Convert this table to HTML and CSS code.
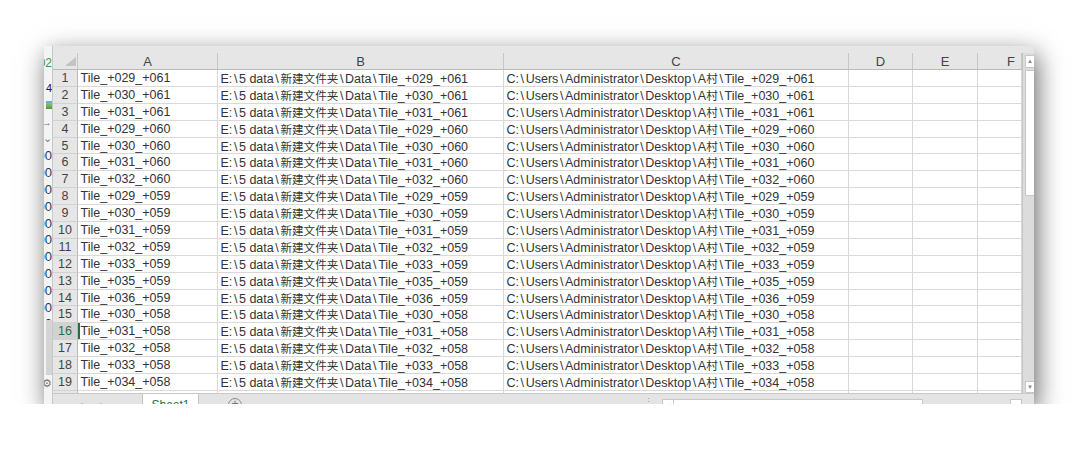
FILE: index.html
```html
<!DOCTYPE html>
<html lang="zh-CN">
<head>
<meta charset="utf-8">
<title>Sheet1</title>
<link rel="stylesheet" href="styles.css">
</head>
<body>
<div class="window">
  <div class="strip">
    <div class="s-top"><span class="s-green">202</span></div>
    <div class="s-line"><span class="s-dark">4</span></div>
    <div class="s-line"><span class="s-icon"></span></div>
    <div class="s-line"><span class="s-gray">→</span></div>
    <div class="s-line"><span class="s-gray">⌄</span></div>
    <div class="s-line"><span class="s-num">00</span></div>
    <div class="s-line"><span class="s-num">00</span></div>
    <div class="s-line"><span class="s-num">00</span></div>
    <div class="s-line"><span class="s-num">00</span></div>
    <div class="s-line"><span class="s-num">00</span></div>
    <div class="s-line"><span class="s-num">00</span></div>
    <div class="s-line"><span class="s-num">00</span></div>
    <div class="s-line"><span class="s-num">00</span></div>
    <div class="s-line"><span class="s-num">00</span></div>
    <div class="s-line"><span class="s-num">00</span></div>
    <div class="s-short"><span class="s-num">00</span></div>
    <div class="s-bar"></div>
    <div class="s-line"><span class="s-gray">⚙</span></div>
  </div>
  <div class="main">
    <div class="topbar"></div>
    <div class="work">
      <div class="sheet">
        <div class="h corner"><svg class="tri" width="24" height="16" viewBox="0 0 24 16"><polygon points="23,4 23,13 12,13" fill="#c3c3c3"/></svg></div>
        <div class="h">A</div><div class="h">B</div><div class="h">C</div><div class="h">D</div><div class="h">E</div><div class="h hF">F</div>

        <div class="rh">1</div><div class="c">Tile_+029_+061</div><div class="c">E:<span class="bs">\</span>5 data<span class="bs">\</span><span class="cjk">新建文件夹</span><span class="bs">\</span>Data<span class="bs">\</span>Tile_+029_+061</div><div class="c">C:<span class="bs">\</span>Users<span class="bs">\</span>Administrator<span class="bs">\</span>Desktop<span class="bs">\</span>A<span class="cjk">村</span><span class="bs">\</span>Tile_+029_+061</div><div class="c"></div><div class="c"></div><div class="c"></div>
        <div class="rh">2</div><div class="c">Tile_+030_+061</div><div class="c">E:<span class="bs">\</span>5 data<span class="bs">\</span><span class="cjk">新建文件夹</span><span class="bs">\</span>Data<span class="bs">\</span>Tile_+030_+061</div><div class="c">C:<span class="bs">\</span>Users<span class="bs">\</span>Administrator<span class="bs">\</span>Desktop<span class="bs">\</span>A<span class="cjk">村</span><span class="bs">\</span>Tile_+030_+061</div><div class="c"></div><div class="c"></div><div class="c"></div>
        <div class="rh">3</div><div class="c">Tile_+031_+061</div><div class="c">E:<span class="bs">\</span>5 data<span class="bs">\</span><span class="cjk">新建文件夹</span><span class="bs">\</span>Data<span class="bs">\</span>Tile_+031_+061</div><div class="c">C:<span class="bs">\</span>Users<span class="bs">\</span>Administrator<span class="bs">\</span>Desktop<span class="bs">\</span>A<span class="cjk">村</span><span class="bs">\</span>Tile_+031_+061</div><div class="c"></div><div class="c"></div><div class="c"></div>
        <div class="rh">4</div><div class="c">Tile_+029_+060</div><div class="c">E:<span class="bs">\</span>5 data<span class="bs">\</span><span class="cjk">新建文件夹</span><span class="bs">\</span>Data<span class="bs">\</span>Tile_+029_+060</div><div class="c">C:<span class="bs">\</span>Users<span class="bs">\</span>Administrator<span class="bs">\</span>Desktop<span class="bs">\</span>A<span class="cjk">村</span><span class="bs">\</span>Tile_+029_+060</div><div class="c"></div><div class="c"></div><div class="c"></div>
        <div class="rh">5</div><div class="c">Tile_+030_+060</div><div class="c">E:<span class="bs">\</span>5 data<span class="bs">\</span><span class="cjk">新建文件夹</span><span class="bs">\</span>Data<span class="bs">\</span>Tile_+030_+060</div><div class="c">C:<span class="bs">\</span>Users<span class="bs">\</span>Administrator<span class="bs">\</span>Desktop<span class="bs">\</span>A<span class="cjk">村</span><span class="bs">\</span>Tile_+030_+060</div><div class="c"></div><div class="c"></div><div class="c"></div>
        <div class="rh">6</div><div class="c">Tile_+031_+060</div><div class="c">E:<span class="bs">\</span>5 data<span class="bs">\</span><span class="cjk">新建文件夹</span><span class="bs">\</span>Data<span class="bs">\</span>Tile_+031_+060</div><div class="c">C:<span class="bs">\</span>Users<span class="bs">\</span>Administrator<span class="bs">\</span>Desktop<span class="bs">\</span>A<span class="cjk">村</span><span class="bs">\</span>Tile_+031_+060</div><div class="c"></div><div class="c"></div><div class="c"></div>
        <div class="rh">7</div><div class="c">Tile_+032_+060</div><div class="c">E:<span class="bs">\</span>5 data<span class="bs">\</span><span class="cjk">新建文件夹</span><span class="bs">\</span>Data<span class="bs">\</span>Tile_+032_+060</div><div class="c">C:<span class="bs">\</span>Users<span class="bs">\</span>Administrator<span class="bs">\</span>Desktop<span class="bs">\</span>A<span class="cjk">村</span><span class="bs">\</span>Tile_+032_+060</div><div class="c"></div><div class="c"></div><div class="c"></div>
        <div class="rh">8</div><div class="c">Tile_+029_+059</div><div class="c">E:<span class="bs">\</span>5 data<span class="bs">\</span><span class="cjk">新建文件夹</span><span class="bs">\</span>Data<span class="bs">\</span>Tile_+029_+059</div><div class="c">C:<span class="bs">\</span>Users<span class="bs">\</span>Administrator<span class="bs">\</span>Desktop<span class="bs">\</span>A<span class="cjk">村</span><span class="bs">\</span>Tile_+029_+059</div><div class="c"></div><div class="c"></div><div class="c"></div>
        <div class="rh">9</div><div class="c">Tile_+030_+059</div><div class="c">E:<span class="bs">\</span>5 data<span class="bs">\</span><span class="cjk">新建文件夹</span><span class="bs">\</span>Data<span class="bs">\</span>Tile_+030_+059</div><div class="c">C:<span class="bs">\</span>Users<span class="bs">\</span>Administrator<span class="bs">\</span>Desktop<span class="bs">\</span>A<span class="cjk">村</span><span class="bs">\</span>Tile_+030_+059</div><div class="c"></div><div class="c"></div><div class="c"></div>
        <div class="rh">10</div><div class="c">Tile_+031_+059</div><div class="c">E:<span class="bs">\</span>5 data<span class="bs">\</span><span class="cjk">新建文件夹</span><span class="bs">\</span>Data<span class="bs">\</span>Tile_+031_+059</div><div class="c">C:<span class="bs">\</span>Users<span class="bs">\</span>Administrator<span class="bs">\</span>Desktop<span class="bs">\</span>A<span class="cjk">村</span><span class="bs">\</span>Tile_+031_+059</div><div class="c"></div><div class="c"></div><div class="c"></div>
        <div class="rh">11</div><div class="c">Tile_+032_+059</div><div class="c">E:<span class="bs">\</span>5 data<span class="bs">\</span><span class="cjk">新建文件夹</span><span class="bs">\</span>Data<span class="bs">\</span>Tile_+032_+059</div><div class="c">C:<span class="bs">\</span>Users<span class="bs">\</span>Administrator<span class="bs">\</span>Desktop<span class="bs">\</span>A<span class="cjk">村</span><span class="bs">\</span>Tile_+032_+059</div><div class="c"></div><div class="c"></div><div class="c"></div>
        <div class="rh">12</div><div class="c">Tile_+033_+059</div><div class="c">E:<span class="bs">\</span>5 data<span class="bs">\</span><span class="cjk">新建文件夹</span><span class="bs">\</span>Data<span class="bs">\</span>Tile_+033_+059</div><div class="c">C:<span class="bs">\</span>Users<span class="bs">\</span>Administrator<span class="bs">\</span>Desktop<span class="bs">\</span>A<span class="cjk">村</span><span class="bs">\</span>Tile_+033_+059</div><div class="c"></div><div class="c"></div><div class="c"></div>
        <div class="rh">13</div><div class="c">Tile_+035_+059</div><div class="c">E:<span class="bs">\</span>5 data<span class="bs">\</span><span class="cjk">新建文件夹</span><span class="bs">\</span>Data<span class="bs">\</span>Tile_+035_+059</div><div class="c">C:<span class="bs">\</span>Users<span class="bs">\</span>Administrator<span class="bs">\</span>Desktop<span class="bs">\</span>A<span class="cjk">村</span><span class="bs">\</span>Tile_+035_+059</div><div class="c"></div><div class="c"></div><div class="c"></div>
        <div class="rh">14</div><div class="c">Tile_+036_+059</div><div class="c">E:<span class="bs">\</span>5 data<span class="bs">\</span><span class="cjk">新建文件夹</span><span class="bs">\</span>Data<span class="bs">\</span>Tile_+036_+059</div><div class="c">C:<span class="bs">\</span>Users<span class="bs">\</span>Administrator<span class="bs">\</span>Desktop<span class="bs">\</span>A<span class="cjk">村</span><span class="bs">\</span>Tile_+036_+059</div><div class="c"></div><div class="c"></div><div class="c"></div>
        <div class="rh">15</div><div class="c">Tile_+030_+058</div><div class="c">E:<span class="bs">\</span>5 data<span class="bs">\</span><span class="cjk">新建文件夹</span><span class="bs">\</span>Data<span class="bs">\</span>Tile_+030_+058</div><div class="c">C:<span class="bs">\</span>Users<span class="bs">\</span>Administrator<span class="bs">\</span>Desktop<span class="bs">\</span>A<span class="cjk">村</span><span class="bs">\</span>Tile_+030_+058</div><div class="c"></div><div class="c"></div><div class="c"></div>
        <div class="rh act">16</div><div class="c act">Tile_+031_+058</div><div class="c">E:<span class="bs">\</span>5 data<span class="bs">\</span><span class="cjk">新建文件夹</span><span class="bs">\</span>Data<span class="bs">\</span>Tile_+031_+058</div><div class="c">C:<span class="bs">\</span>Users<span class="bs">\</span>Administrator<span class="bs">\</span>Desktop<span class="bs">\</span>A<span class="cjk">村</span><span class="bs">\</span>Tile_+031_+058</div><div class="c"></div><div class="c"></div><div class="c"></div>
        <div class="rh">17</div><div class="c">Tile_+032_+058</div><div class="c">E:<span class="bs">\</span>5 data<span class="bs">\</span><span class="cjk">新建文件夹</span><span class="bs">\</span>Data<span class="bs">\</span>Tile_+032_+058</div><div class="c">C:<span class="bs">\</span>Users<span class="bs">\</span>Administrator<span class="bs">\</span>Desktop<span class="bs">\</span>A<span class="cjk">村</span><span class="bs">\</span>Tile_+032_+058</div><div class="c"></div><div class="c"></div><div class="c"></div>
        <div class="rh">18</div><div class="c">Tile_+033_+058</div><div class="c">E:<span class="bs">\</span>5 data<span class="bs">\</span><span class="cjk">新建文件夹</span><span class="bs">\</span>Data<span class="bs">\</span>Tile_+033_+058</div><div class="c">C:<span class="bs">\</span>Users<span class="bs">\</span>Administrator<span class="bs">\</span>Desktop<span class="bs">\</span>A<span class="cjk">村</span><span class="bs">\</span>Tile_+033_+058</div><div class="c"></div><div class="c"></div><div class="c"></div>
        <div class="rh">19</div><div class="c">Tile_+034_+058</div><div class="c">E:<span class="bs">\</span>5 data<span class="bs">\</span><span class="cjk">新建文件夹</span><span class="bs">\</span>Data<span class="bs">\</span>Tile_+034_+058</div><div class="c">C:<span class="bs">\</span>Users<span class="bs">\</span>Administrator<span class="bs">\</span>Desktop<span class="bs">\</span>A<span class="cjk">村</span><span class="bs">\</span>Tile_+034_+058</div><div class="c"></div><div class="c"></div><div class="c"></div>
        <div class="rh">20</div><div class="c"></div><div class="c"></div><div class="c"></div><div class="c"></div><div class="c"></div><div class="c"></div>
      </div>
      <div class="vscroll">
        <div class="vbtn up">▲</div>
        <div class="vthumb"></div>
        <div class="vspace"></div>
        <div class="vbtn down">▼</div>
      </div>
    </div>
    <div class="tabs">
      <div class="nav"><span class="arrow">◀</span><span class="arrow">▶</span></div>
      <div class="tab">Sheet1</div>
      <div class="add">+</div>
      <div class="dots">⋮</div>
      <div class="hscroll">
        <div class="hbtn">◀</div>
        <div class="hthumb"></div>
        <div class="hspace"></div>
        <div class="hbtn">▶</div>
      </div>
    </div>
  </div>
</div>
</body>
</html>
```

FILE: styles.css
```css
* { box-sizing: border-box; }

body {
  margin: 0;
  background: #ffffff;
  font-family: "Liberation Sans", "Noto Sans CJK SC", sans-serif;
}

.window {
  margin: 46px 0 0 44px;
  width: 990px;
  height: 358px;
  display: flex;
  overflow: hidden;
  background: #e6e6e6;
  box-shadow: 3px 8px 24px rgba(0, 0, 0, 0.6);
}

/* fragment of the window behind */
.strip {
  width: 9px;
  flex: none;
  background: #f4f4f4;
  border-right: 1px solid #c8c8c8;
  overflow: hidden;
  display: flex;
  flex-direction: column;
  font-size: 12px;
}
.s-top {
  height: 33.5px;
  flex: none;
  display: flex;
  align-items: center;
  justify-content: flex-end;
  overflow: hidden;
}
.s-line, .s-short {
  height: 16.9px;
  flex: none;
  display: flex;
  align-items: center;
  justify-content: flex-end;
  overflow: hidden;
  white-space: nowrap;
}
.s-short { height: 4px; align-items: flex-start; }
.s-green { color: #3c9a3c; }
.s-dark { color: #222; font-size: 11px; }
.s-gray { color: #777; font-size: 11px; }
.s-num { color: #2a3d5a; font-size: 13px; }
.s-icon {
  width: 6px;
  height: 8px;
  background: linear-gradient(#8fc96a, #4a9c3a);
  border-top: 2px solid #6aa9d8;
}
.s-bar {
  height: 55px;
  flex: none;
  margin-left: 2px;
  background: #d4d4d4;
}

.main {
  flex: 1;
  display: flex;
  flex-direction: column;
  min-width: 0;
}

.topbar {
  height: 7px;
  flex: none;
  background: #e6e6e6;
}

.work {
  height: 340px;
  flex: none;
  display: flex;
}

.sheet {
  width: 969px;
  flex: none;
  display: grid;
  grid-template-columns: 25px 140px 286px 345px 64px 65px 44px;
  grid-template-rows: 17px;
  grid-auto-rows: 16.9px;
  overflow: hidden;
  background: #ffffff;
  font-size: 12.5px;
  color: #333333;
}

.h {
  background: #e6e6e6;
  border-right: 1px solid #c6c6c6;
  border-bottom: 1px solid #b9b9b9;
  color: #444;
  font-size: 13px;
  line-height: 17px;
  text-align: center;
}
.hF { text-align: right; padding-right: 6px; }
.corner { position: relative; }
.tri { position: absolute; left: 0; top: 0; }

.rh {
  background: #e6e6e6;
  border-right: 1px solid #b9b9b9;
  border-bottom: 1px solid #d2d2d2;
  color: #444;
  text-align: center;
  padding-top: 1px;
  line-height: 15px;
  font-size: 12.5px;
}
.rh.act {
  background: #d2d2d2;
  color: #217346;
}

.c {
  border-right: 1px solid #d9d9d9;
  border-bottom: 1px solid #d9d9d9;
  padding: 1px 0 0 2.5px;
  line-height: 15px;
  white-space: nowrap;
}
.c.act { box-shadow: inset 2px 0 0 #217346; }

.bs { padding: 0 1.6px; }
.cjk { font-size: 11.6px; }

.vscroll {
  width: 12px;
  flex: none;
  background: #dcdcdc;
  border-left: 1px solid #c4c4c4;
  display: flex;
  flex-direction: column;
  align-items: flex-end;
  padding-top: 2px;
}
.vbtn {
  width: 9px;
  height: 13px;
  flex: none;
  background: #ffffff;
  border: 1px solid #c8c8c8;
  border-right: none;
  color: #888;
  font-size: 6px;
  line-height: 11px;
  text-align: center;
}
.vthumb {
  width: 9px;
  height: 126px;
  flex: none;
  margin-top: 2px;
  background: #ffffff;
  border: 1px solid #c8c8c8;
  border-right: none;
}
.vspace { flex: 1; }
.down { height: 12px; }

.tabs {
  height: 20px;
  flex: none;
  display: flex;
  align-items: flex-start;
  background: #e4e4e4;
  border-top: 1px solid #c8c8c8;
}
.nav {
  width: 89px;
  flex: none;
  display: flex;
  gap: 15px;
  padding: 6px 0 0 23px;
}
.arrow { color: #c4c4c4; font-size: 8px; }
.tab {
  width: 57px;
  height: 20px;
  flex: none;
  background: #ffffff;
  border-left: 1px solid #c6c6c6;
  border-right: 1px solid #c6c6c6;
  color: #217346;
  font-size: 12px;
  text-align: center;
  padding-top: 4px;
}
.add {
  width: 14px;
  height: 14px;
  flex: none;
  margin: 4px 0 0 29px;
  border: 1px solid #8a8a8a;
  border-radius: 50%;
  color: #777;
  font-size: 12px;
  line-height: 11px;
  text-align: center;
}
.dots {
  width: 4px;
  flex: none;
  margin: 4px 0 0 402px;
  color: #999;
  font-size: 9px;
  line-height: 8px;
}
.hscroll {
  width: 360px;
  flex: none;
  margin: 5px 0 0 14px;
  height: 14px;
  display: flex;
}
.hbtn {
  width: 12px;
  height: 14px;
  flex: none;
  background: #ffffff;
  border: 1px solid #c8c8c8;
  color: #999;
  font-size: 6px;
  line-height: 12px;
  text-align: center;
}
.hthumb {
  width: 249px;
  flex: none;
  background: #ffffff;
  border: 1px solid #c8c8c8;
  border-left: none;
}
.hspace { flex: 1; }
```
